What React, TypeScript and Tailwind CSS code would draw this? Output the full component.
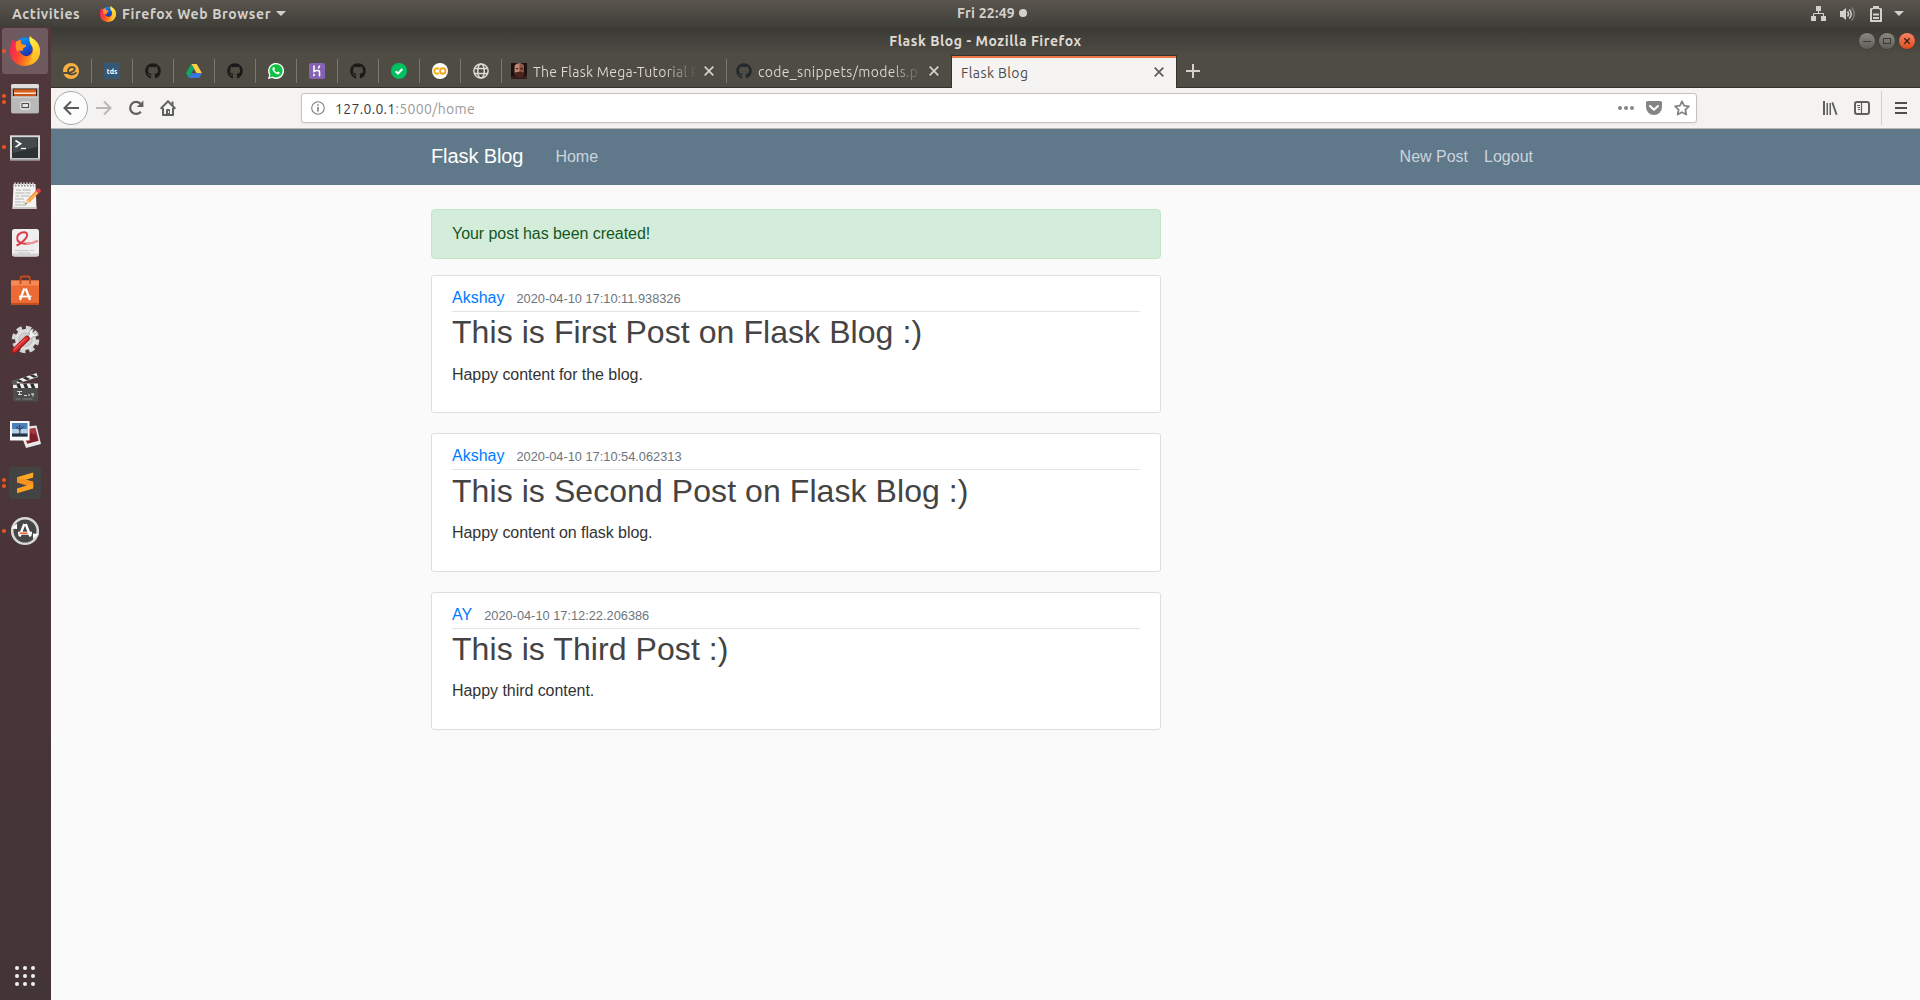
import React from "react";
import { FaGithub } from "react-icons/fa";

const UI = "font-['Ubuntu','Noto_Sans',sans-serif]";

function FirefoxLogo({ className, id }: { className: string; id: string }) {
  return (
    <svg viewBox="0 0 30 30" className={className}>
      <defs>
        <linearGradient id={id + "f"} x1="0.05" y1="0.3" x2="1" y2="0.6">
          <stop offset="0" stopColor="#f8245c" />
          <stop offset="0.35" stopColor="#fb4a2c" />
          <stop offset="0.65" stopColor="#ff8a1c" />
          <stop offset="1" stopColor="#ffd02c" />
        </linearGradient>
        <linearGradient id={id + "y"} x1="0.3" y1="0" x2="0.5" y2="1">
          <stop offset="0" stopColor="#fff44a" />
          <stop offset="1" stopColor="#ffb41c" />
        </linearGradient>
        <linearGradient id={id + "b"} x1="0.2" y1="0" x2="0.6" y2="1">
          <stop offset="0" stopColor="#0b9bf5" />
          <stop offset="0.55" stopColor="#0a5bdc" />
          <stop offset="1" stopColor="#3a1f7a" />
        </linearGradient>
      </defs>
      <circle cx="15.5" cy="12" r="10.8" fill={`url(#${id}b)`} />
      <path
        d="M2.7 3.3C3.5 5 4.5 5.4 6 6C8 4.5 9 4.2 11.3 4C10 6 11 7.5 12.5 8.5L16.2 9C16 10.8 14.4 11.5 13 12.5L12.6 15C11.4 14.4 10.5 14.8 9.8 15.6C11 19 15.5 21.4 19 19.6C22.5 17.6 23.4 14 22 10C20 7 18.6 4 20 0C21.4 2.4 24 3 26 5.2C28.8 8 30 12 30 15.6C30 23.6 23.6 30 15 30C6.4 30 0 23.6 0 16C0 11 1 7 2.7 3.3Z"
        fill={`url(#${id}f)`}
      />
      <path
        d="M20 0C18.6 4 20 7 22 10C24 13 23.4 18 21 20.6C23 22.6 20 26.5 17 27.5C24 27 29.5 22 30 15.6C30.1 12 28.8 8 26 5.2C24 3 21.4 2.4 20 0Z"
        fill={`url(#${id}y)`}
      />
      <path d="M6 6C8 4.5 9 4.2 11.3 4C10 6 11 7.5 12.5 8.5L16.2 9C16 10.8 14.4 11.5 13 12.5L12.6 15C10 13.5 8 15 7.4 16C5.5 13 5.4 9 6 6Z" fill="#ff9420" />
    </svg>
  );
}

function Slot({ dots = 0, active = false, children }: { dots?: number; active?: boolean; children: React.ReactNode }) {
  return (
    <svg viewBox="0 0 51 48" className="block h-12 w-[51px] shrink-0">
      {active && <rect x="2" y="1" width="46" height="46" rx="3" fill="#6f5a5f" />}
      {dots === 1 && <circle cx="4" cy="24" r="2.1" fill="#e95420" />}
      {dots === 2 && (
        <g fill="#e95420">
          <circle cx="4" cy="21" r="2.1" />
          <circle cx="4" cy="27" r="2.1" />
        </g>
      )}
      {children}
    </svg>
  );
}

function Dock() {
  return (
    <aside className="flex w-[51px] shrink-0 flex-col justify-between bg-linear-to-b from-[#51373c] to-[#433437]">
      <div className="flex flex-col">
        <div className="grid h-12 w-[51px] grid-cols-1 grid-rows-1">
          <div className="col-start-1 row-start-1">
            <Slot dots={1} active>
              <g />
            </Slot>
          </div>
          <div className="col-start-1 row-start-1 flex items-center justify-center">
            <FirefoxLogo id="dock" className="mr-px size-[30px]" />
          </div>
        </div>
        {/* Files */}
        <Slot dots={2}>
          <rect x="11" y="9" width="28" height="29.5" rx="2" fill="#a9a9a9" />
          <rect x="11" y="9" width="28" height="4.5" rx="2" fill="#dedede" />
          <rect x="13" y="13.5" width="24" height="8.5" fill="#3a2018" />
          <rect x="14" y="14.3" width="22" height="7" fill="#d8601c" />
          <path d="M14 17.5h22v2h-22z" fill="#f6e3d0" />
          <path d="M14 19h22v2.5h-22z" fill="#c8541c" />
          <rect x="11.5" y="21.5" width="27" height="16.5" rx="1.2" fill="#b9b9b9" />
          <path d="M12 22h26" stroke="#e4e4e4" />
          <rect x="20.8" y="27.2" width="9" height="7" rx="1.6" fill="none" stroke="#e8e8e8" strokeWidth="1.2" />
          <rect x="22" y="28.6" width="6.6" height="3.8" fill="#eee" stroke="#444" />
        </Slot>
        {/* Terminal */}
        <Slot dots={1}>
          <rect x="10" y="12.3" width="30" height="25" fill="#d9d9d9" />
          <rect x="10" y="35.6" width="30" height="1.8" fill="#a5a5a5" />
          <rect x="12" y="14.3" width="26" height="20.7" fill="#2d3234" />
          <path d="M13 15h24v9L13 30z" fill="#454b4d" />
          <path d="M15.5 17.5l5 3.3l-5 3.3" fill="none" stroke="#fff" strokeWidth="1.7" />
          <path d="M21 25.5h5" stroke="#fff" strokeWidth="1.3" />
        </Slot>
        {/* Text editor */}
        <Slot>
          <path d="M13.5 13h22l1 25h-24z" fill="#f3f3f1" />
          <path d="M12.5 36h24v2h-24z" fill="#c9c9c5" />
          <path d="M15 14v-2.5m3 2.5v-2.5m3 2.5v-2.5m3 2.5v-2.5m3 2.5v-2.5m3 2.5v-2.5m3 2.5v-2.5" stroke="#cfcfcf" strokeWidth="1.6" />
          <path d="M15 14.8h19" stroke="#555" strokeDasharray="1.5 1.5" />
          <path d="M16 19h5m1.5 0h8M15.5 22h9m1 0h5M15.5 25h4m1.5 0h9M15 28h9M15 31h6m1 0h3M15 34h11" stroke="#aaa" strokeWidth="0.9" />
          <path d="M25 33.5l2-4.5l9.5-10l2.8 2.6l-9.8 10z" fill="#f29333" />
          <path d="M27.8 31l10-10" stroke="#ffc06c" strokeWidth="1.1" />
          <path d="M25 33.5l2-4.5l2.5 2.6z" fill="#ecd3ae" />
          <path d="M25 33.5l.8-1.8l1 1z" fill="#333" />
          <path d="M35.5 19.8l2-2c1.5-1 4 1.4 3.2 2.8l-2 2z" fill="#e2464c" />
        </Slot>
        {/* Document viewer */}
        <Slot>
          <rect x="12" y="10" width="27" height="27.5" rx="2.5" fill="#efefef" />
          <path d="M12 34.5h27v.5a2.5 2.5 0 0 1-2.5 2.5h-22a2.5 2.5 0 0 1-2.5-2.5z" fill="#d2d2d2" />
          <path d="M16.500 26.500C21 25 27.500 19 27.200 15.500C26.800 11.500 17.500 13 17.200 19C17 25.500 28 26.500 38 22" fill="none" stroke="#dc3b48" strokeWidth="1.9" />
          <path d="M26 24.500c4 0 8-.8 12-3.200" fill="none" stroke="#f09aa0" strokeWidth="2" />
          <path d="M15 31.500h14m1 0h4M18 33.800h12" stroke="#c4c4c4" strokeWidth="0.9" />
        </Slot>
        {/* Software */}
        <Slot>
          <path d="M11 13.500h28v24h-28z" fill="#ec6a33" />
          <path d="M11 13.500h28v5h-28z" fill="#f58a55" />
          <path d="M11 36h28v1.800h-28z" fill="#c24e1c" />
          <path d="M20.500 17v-5c0-2 1-2.500 2.500-2.500h4.500c1.500 0 2.500.5 2.500 2.500v5" fill="none" stroke="#c9481a" strokeWidth="1.800" />
          <path d="M24.300 21.500l-4.300 11.500M25.700 21.500l4.300 11.500" stroke="#fff" strokeWidth="2.200" fill="none" />
          <path d="M19 29.500h12.300" stroke="#fff" strokeWidth="1.800" />
        </Slot>
        {/* System tools */}
        <Slot>
          <circle cx="25.500" cy="24.500" r="11.800" fill="none" stroke="#d5d5d5" strokeWidth="4" strokeDasharray="5.300 3.970" />
          <circle cx="25.500" cy="24.500" r="10.500" fill="#dfdfdf" />
          <circle cx="25.500" cy="24.500" r="6.800" fill="#d0d0d0" stroke="#bdbdbd" />
          <path d="M26.500 22.500l3-3c-1-3 1-5.500 4-5.500l-1 3.500l2 1.500l3.500-1.500c0 3-2.500 5-5.200 4.200l-3 3z" fill="#f1f1f1" stroke="#8f8f8f" strokeWidth="0.700" />
          <path d="M14.500 35.500l12.500-12" stroke="#a3181c" strokeWidth="5.600" strokeLinecap="round" />
          <path d="M14.500 35l12-11.500" stroke="#dd3034" strokeWidth="3.600" strokeLinecap="round" />
          <path d="M14.500 33.800l10-9.500" stroke="#f4797a" strokeWidth="0.900" strokeLinecap="round" />
        </Slot>
        {/* Video editor */}
        <Slot>
          <path d="M12 18.500L36.500 10l1.300 4L13.500 22z" fill="#eee" />
          <path d="M15.500 17.300l4.500 2.300l3.300-1.100l-4.500-2.300zM22.500 14.900l4.500 2.300l3.300-1.100l-4.500-2.300zM29.500 12.500l4.500 2.300l3.300-1.100l-4.500-2.300z" fill="#2c2c2c" />
          <rect x="13" y="20.500" width="25" height="5" fill="#eee" />
          <path d="M16 20.500h3.500l2 5h-3.500zM23 20.500h3.500l2 5h-3.500zM30 20.500h3.500l2 5h-3.500z" fill="#2c2c2c" />
          <rect x="13" y="25" width="25" height="13.500" rx="1" fill="#4b4d4b" />
          <circle cx="14.500" cy="19.500" r="2.500" fill="#555" />
          <path d="M17 28.500h5m-2.500 0v3.500m-1.500-.5h4M24 32.500h3m1-.5h2m1-1h3m-1-.5v3" stroke="#ddd" strokeWidth="1" fill="none" />
          <path d="M15.500 36h5m2 0h10" stroke="#8a8c8a" strokeWidth="0.800" />
        </Slot>
        {/* Photos */}
        <Slot>
          <path d="M27 15.500l9.500-1l4.500 18.500l-15 4l-3-8z" fill="#e9e9e9" />
          <path d="M27.500 18l8-1.200l3.300 13l-11.500 3l-1.800-4z" fill="#a33a42" />
          <path d="M27 27l3-3l1.500-3l2 3l2-2l2.500 7.500l-10.500 3z" fill="#7b1f2a" />
          <rect x="10" y="10" width="19.500" height="19.500" fill="#fafafa" />
          <rect x="12" y="12" width="15.500" height="13.500" fill="#4d7fb8" />
          <rect x="12" y="18" width="15.500" height="5" fill="#b5cfe6" />
          <rect x="12" y="22.500" width="15.500" height="3" fill="#26303f" />
          <path d="M19.800 23v-5m0 1l-3.500-3m3.500 3l3.500-3.500m-3.500 2v-3.500" stroke="#1f2735" strokeWidth="0.900" fill="none" />
        </Slot>
        {/* Sublime Text */}
        <Slot dots={2}>
          <rect x="9" y="8" width="32" height="32" rx="2.500" fill="#434343" />
          <path d="M17 18.200L33.200 13.400V18.600L17 23.600z" fill="#ffa726" />
          <path d="M17 18.200L33.200 22.600V28.600L17 23.600z" fill="#f7931e" />
          <path d="M17 29.500L33.200 24.500V29.400L17 34.300z" fill="#ffa01f" />
        </Slot>
        {/* Software updater */}
        <Slot dots={1}>
          <circle cx="25" cy="24" r="12.800" fill="#474747" stroke="#d8d8d8" strokeWidth="2.600" />
          <path d="M11 21.500l6-5l0 5.500zM39 27l-6 5l0-5.500z" fill="#fff" />
          <path d="M24.300 17l-4.800 12.500M25.700 17l4.800 12.500" stroke="#fff" strokeWidth="2.400" fill="none" />
          <path d="M18 26.200h14" stroke="#fff" strokeWidth="3" />
          <path d="M19.500 26.200h8" stroke="#e95420" strokeWidth="1.400" />
        </Slot>
      </div>
      <div className="mb-3.5 ml-[15px] grid w-5 grid-cols-3 gap-1">
        {Array.from({ length: 9 }, (_, i) => (
          <span key={i} className="size-1 rounded-full bg-[#f2f0f0]" />
        ))}
      </div>
    </aside>
  );
}

function TopBar() {
  return (
    <header className={`${UI} grid h-[27px] shrink-0 grid-cols-[1fr_auto_1fr] items-center bg-linear-to-b from-[#5a564e] to-[#3f3e39] text-sm font-semibold text-[#d2d0cb]`}>
      <div className="flex items-center pl-3">
        <span className="w-[88px] tracking-[0.6px]">Activities</span>
        <FirefoxLogo id="bar" className="size-4" />
        <span className="ml-[6px] tracking-[0.610px]">Firefox Web Browser</span>
        <svg viewBox="0 0 10 5" className="ml-[5px] h-[5px] w-[10px]">
          <path d="M0 0h10L5 5z" fill="#d2d0cb" />
        </svg>
      </div>
      <div className="mb-px flex items-center gap-1 pl-[60px]">
        <span className="tracking-[0.250px]">Fri 22:49</span>
        <span className="mr-[-4px] size-2 rounded-full bg-[#d2d0cb]" />
      </div>
      <div className="flex items-center justify-end pr-4 text-[#d2d0cb]">
        <svg viewBox="0 0 15 15" className="mr-[13px] size-[15px]" fill="currentColor">
          <path d="M5 0h5v5H5zM0 10h5v5H0zM10 10h5v5h-5z" />
          <path d="M7.500 5v2.500M2.500 10V7.500h10V10" fill="none" stroke="currentColor" />
        </svg>
        <svg viewBox="0 0 16 16" className="mr-[15px] size-4" fill="currentColor">
          <path d="M1 5h2.500L7 2v12L3.500 11H1z" />
          <path d="M8.500 5.500c1.300 1.500 1.300 3.500 0 5M10.300 3.500c2.400 2.700 2.400 6.300 0 9" fill="none" stroke="currentColor" strokeWidth="1.500" />
          <path d="M12.600 1.500c3.400 4 3.400 9 0 13" fill="none" stroke="currentColor" strokeWidth="1.500" opacity="0.350" />
        </svg>
        <svg viewBox="0 0 12 16" className="mr-3 h-4 w-3" fill="currentColor">
          <path fillRule="evenodd" d="M3 0h6v2h2l1 1v13H0V3l1-1h2zM2 4v10h8V4L9 3H3z" />
          <path d="M3 7.500h6v2H3zM3 11h6v2H3z" />
        </svg>
        <svg viewBox="0 0 10 5" className="h-[5px] w-[10px]">
          <path d="M0 0h10L5 5z" fill="#d2d0cb" />
        </svg>
      </div>
    </header>
  );
}

function TitleBar() {
  return (
    <div className={`${UI} grid h-7 grid-cols-[1fr_auto_1fr] items-center bg-linear-to-b from-[#3a3935] to-[#4f4c44] text-sm font-bold text-[#dfdbd2]`}>
      <span />
      <span className="tracking-[0.550px]">Flask Blog - Mozilla Firefox</span>
      <div className="flex justify-end gap-1 pr-[5px]">
        <span className="flex size-4 items-center justify-center rounded-full bg-linear-to-b from-[#8a887f] to-[#5f5e59] shadow-[0_0_0_0.500px_#33322e]">
          <svg viewBox="0 0 16 16" className="size-4">
            <path d="M4 8.500h8" stroke="#3b3a36" />
          </svg>
        </span>
        <span className="flex size-4 items-center justify-center rounded-full bg-linear-to-b from-[#8a887f] to-[#5f5e59] shadow-[0_0_0_0.500px_#33322e]">
          <svg viewBox="0 0 16 16" className="size-4">
            <rect x="4.500" y="5.500" width="7" height="5" fill="none" stroke="#3b3a36" />
          </svg>
        </span>
        <span className="flex size-4 items-center justify-center rounded-full bg-linear-to-b from-[#f68363] to-[#e04a18] shadow-[0_0_0_0.500px_#33322e]">
          <svg viewBox="0 0 16 16" className="size-4">
            <path d="M5.300 5.300l5.400 5.400M10.700 5.300l-5.400 5.400" stroke="#3b2018" strokeWidth="1.300" />
          </svg>
        </span>
      </div>
    </div>
  );
}

const favicons: React.ReactNode[] = [
  <svg key="e" viewBox="0 0 16 16" className="size-4">
    <circle cx="8" cy="8" r="8" fill="#fbb040" />
    <path d="M0 9.800C5 10.500 11.800 9 11.800 5.800C11.800 3.200 5 3.400 5 8.300C5 12.300 10.500 12.400 13.500 9.300" fill="none" stroke="#4d4a42" strokeWidth="1.800" />
  </svg>,
  <span key="tds" className="flex size-4 items-center justify-center bg-[#355876] text-[7px] leading-none font-bold text-white">tds</span>,
  <FaGithub key="g1" className="size-4 text-[#1b1a19]" />,
  <svg key="drive" viewBox="0 0 16 16" className="size-4">
    <path d="M5.300 1h5.400L16 10.200h-5.300z" fill="#ffcf48" />
    <path d="M5.300 1L8 5.600L2.700 15L0 10.200z" fill="#11a861" />
    <path d="M5.400 10.200H16L13.300 15H2.700z" fill="#3777e3" />
  </svg>,
  <FaGithub key="g2" className="size-4 text-[#1b1a19]" />,
  <svg key="wa" viewBox="0 0 16 16" className="size-4">
    <path d="M0 16l1.100-4.100A8 8 0 1 1 4.200 15z" fill="#fff" />
    <path d="M1.700 14.300l.8-2.800A6.600 6.600 0 1 1 4.600 13.500z" fill="#0dc143" />
    <path d="M5.200 4.200c.4-.3.900-.3 1.100.1l.6 1.400c.1.300-.6 1-.6 1.200c.6 1.200 1.500 2 2.700 2.500c.3.100.8-.9 1.100-.8l1.500.8c.4.900-.7 2-1.700 2C8 11.300 4.600 8.400 4.400 6c0-.7.300-1.400.8-1.800z" fill="#fff" />
  </svg>,
  <svg key="heroku" viewBox="0 0 16 16" className="size-4">
    <rect width="16" height="16" rx="2" fill="#8562b3" />
    <path d="M5 2.500v6c1.500-.8 5.500-2 5.500.5v4.500M10.500 2.500c0 1.300-.4 2-1.300 3" fill="none" stroke="#fff" strokeWidth="1.600" />
    <path d="M4.200 10.300l2.300 1.700l-2.300 1.700z" fill="#fff" />
  </svg>,
  <FaGithub key="g3" className="size-4 text-[#1b1a19]" />,
  <svg key="check" viewBox="0 0 16 16" className="size-4">
    <circle cx="8" cy="8" r="8" fill="#00c160" />
    <path d="M4.700 8.200l2.300 2.300l4.300-4.500" fill="none" stroke="#fff" strokeWidth="2" />
  </svg>,
  <svg key="colab" viewBox="0 0 16 16" className="size-4">
    <circle cx="8" cy="8" r="8" fill="#fff" />
    <path d="M6.800 6A2.700 2.700 0 1 0 6.800 10" fill="none" stroke="#f9ab00" strokeWidth="1.900" />
    <circle cx="10.800" cy="8" r="2.700" fill="none" stroke="#f5a320" strokeWidth="1.900" />
  </svg>,
  <svg key="globe" viewBox="0 0 16 16" className="size-4" fill="none" stroke="#dfdbd2" strokeWidth="1.500">
    <circle cx="8" cy="8" r="7.100" />
    <ellipse cx="8" cy="8" rx="3.300" ry="7.100" />
    <path d="M1.500 5.500h13M1.500 10.500h13" />
  </svg>,
];

function Close({ color }: { color: string }) {
  return (
    <svg viewBox="0 0 10 10" className="size-[10px] shrink-0">
      <path d="M0.700 0.700l8.600 8.600M9.300 0.700l-8.600 8.600" stroke={color} strokeWidth="1.700" />
    </svg>
  );
}

function TabStrip() {
  return (
    <div className={`${UI} flex h-[33px] items-stretch bg-[#4f4c44] text-sm text-[#dfdbd2]`}>
      {favicons.map((icon, i) => (
        <div key={i} className="flex w-[41px] items-center border-b border-[#33322e] pl-3">
          {icon}
          <span className="ml-3 h-6 w-px bg-[#7b786f]" />
        </div>
      ))}
      <div className="flex w-[225px] items-center border-b border-[#33322e] pl-[9px]">
        <svg viewBox="0 0 16 16" className="size-4 shrink-0">
          <rect width="16" height="16" fill="#1d1110" />
          <path d="M3.500 4c0-5 9.500-5 9.500 0v5c0 3-2 5-4.500 5s-5-2-5-5z" fill="#c08573" />
          <path d="M8.500 1c3 0 4.500 1.500 4.500 4v4c0 3-2 5-4.500 5z" fill="#8a5040" />
          <path d="M4 9c2 1 3-.5 4.500-.5S11 10 13 9c0 4-2 6.500-4.500 6.500S4 13 4 9z" fill="#4c221b" />
          <path d="M4.800 5.700h2.500M9.300 5.700h2.500" stroke="#2e1510" />
          <path d="M0 13l4 0l3 3H0zM16 12l-3 1l-3 3h6z" fill="#33211f" />
        </svg>
        <span className="mt-0.5 ml-[6px] w-[166px] overflow-hidden bg-linear-to-r from-[#dfdbd2] from-80% to-transparent bg-clip-text tracking-[0.250px] whitespace-nowrap text-transparent">The Flask Mega-Tutorial P</span>
        <span className="ml-[7px] flex">
          <Close color="#d5d1c8" />
        </span>
        <span className="ml-3 h-6 w-px bg-[#7b786f]" />
      </div>
      <div className="flex w-[224px] items-center border-b border-[#33322e] pl-[9px]">
        <FaGithub className="size-4 shrink-0 text-[#24292e]" />
        <span className="mt-0.5 ml-[6px] w-[165px] overflow-hidden bg-linear-to-r from-[#dfdbd2] from-80% to-transparent bg-clip-text tracking-[0.320px] whitespace-nowrap text-transparent">code_snippets/models.p</span>
        <span className="ml-[6px] flex">
          <Close color="#d5d1c8" />
        </span>
      </div>
      <div className="flex w-[226px] items-center justify-between border border-b-0 border-[#33322e] bg-[#f5f4f2] pr-3 pl-[9px] text-[#4c4c4c] shadow-[inset_0_2px_0_#f07746]">
        <span className="mt-px tracking-[0.400px]">Flask Blog</span>
        <Close color="#5c5c5c" />
      </div>
      <div className="flex grow items-center border-b border-[#33322e] pl-[9px]">
        <svg viewBox="0 0 14 14" className="mb-px size-[14px]">
          <path d="M7 0v14M0 7h14" stroke="#d5d1c8" strokeWidth="2" />
        </svg>
      </div>
    </div>
  );
}

function Toolbar() {
  return (
    <div className={`${UI} flex h-[41px] items-center border-b border-[#b9b5b0] bg-[#f4f3f1] pl-[3px] text-sm`}>
      <span className="flex size-[34px] items-center justify-center rounded-full border border-[#aaa9a8] bg-[#fcfcfc]">
        <svg viewBox="0 0 16 16" className="size-4" fill="none" stroke="#5a5a59" strokeWidth="2">
          <path d="M16 8H1.500M8 1.500L1.500 8L8 14.500" />
        </svg>
      </span>
      <svg viewBox="0 0 16 16" className="ml-2 size-4" fill="none" stroke="#b9b8b6" strokeWidth="2">
        <path d="M0 8h14.500M8 1.500L14.500 8L8 14.500" />
      </svg>
      <svg viewBox="0 0 16 16" className="ml-4 size-4" fill="none" stroke="#5f5f5e" strokeWidth="2.200">
        <path d="M12.800 11.700A6 6 0 1 1 12.500 3.800" />
        <path d="M15.400 0.500V7.100H8.800z" fill="#5f5f5e" stroke="none" />
      </svg>
      <svg viewBox="0 0 16 16" className="ml-4 size-4">
        <path d="M0.600 8.700L8 1.300L15.400 8.700" fill="none" stroke="#5f5f5e" strokeWidth="2" />
        <path d="M11.500 1.500h2v4l-2-1.800z" fill="#5f5f5e" />
        <path d="M3 8v7h10V8" fill="none" stroke="#5f5f5e" strokeWidth="2" strokeLinejoin="round" />
        <path d="M6 15V9.500L6.500 9h3l.5.500V15z" fill="#5f5f5e" />
        <rect x="8" y="11" width="1" height="2" fill="#f4f3f1" />
      </svg>
      <div className="ml-[125px] flex h-[30px] w-[1396px] items-center rounded-[3px] border border-[#c3c2c0] bg-white pr-[6px] pl-[9px] shadow-[0_1px_3px_rgba(0,0,0,0.060)]">
        <svg viewBox="0 0 14 14" className="size-[14px]" fill="none" stroke="#7c7c7c">
          <circle cx="7" cy="7" r="6.300" strokeWidth="1.100" />
          <path d="M7 6v4.500M7 3.200v1.600" strokeWidth="1.600" />
        </svg>
        <span className="mt-0.5 ml-[10px] grow tracking-[0.320px] text-[#9a9a9a]">
          <span className="text-[#3a3a3a]">127.0.0.1</span>:5000/home
        </span>
        <svg viewBox="0 0 16 4" className="h-1 w-4" fill="#858585">
          <circle cx="2" cy="2" r="2" />
          <circle cx="8" cy="2" r="2" />
          <circle cx="14" cy="2" r="2" />
        </svg>
        <svg viewBox="0 0 16 16" className="ml-3 size-4">
          <path d="M1.800 1h12.400c1 0 1.800.8 1.800 1.800V7a8 8 0 0 1-16 0V2.800C0 1.800.8 1 1.800 1z" fill="#858585" />
          <path d="M4 6l4 3.800L12 6" fill="none" stroke="#fff" strokeWidth="2" strokeLinecap="round" strokeLinejoin="round" />
        </svg>
        <svg viewBox="0 0 16 16" className="ml-3 size-4">
          <path d="M8 1.300l2.100 4.400l4.800.6l-3.500 3.300l.9 4.900L8 12.200l-4.300 2.300l.9-4.900L1.100 6.300l4.800-.6z" fill="none" stroke="#858585" strokeWidth="1.800" strokeLinejoin="round" />
        </svg>
      </div>
      <svg viewBox="0 0 16 16" className="ml-[125px] size-4" fill="#5f5f5e">
        <path d="M1 1h2v14H1zM4.500 3h1.500v12H4.500zM7.500 3H9v12H7.500zM9.500 2.700l1.700-.6l4.300 12.300l-1.800.6z" />
      </svg>
      <svg viewBox="0 0 16 16" className="ml-4 size-4" fill="none" stroke="#5f5f5e">
        <rect x="1" y="2" width="14" height="12" rx="2" strokeWidth="2" />
        <path d="M7.500 2v12" strokeWidth="1.200" />
        <path d="M3 5.500h3M3.500 7.500H6M4 9.500h2" strokeWidth="1" />
      </svg>
      <span className="ml-[11px] h-[34px] w-px bg-[#d3d1ce]" />
      <svg viewBox="0 0 12 12" className="ml-[13px] size-3" fill="#4f4f4e">
        <path d="M0 0h12v2H0zM0 5h12v2H0zM0 10h12v2H0z" />
      </svg>
    </div>
  );
}

const posts = [
  { author: "Akshay", date: "2020-04-10 17:10:11.938326", title: "This is First Post on Flask Blog :)", body: "Happy content for the blog." },
  { author: "Akshay", date: "2020-04-10 17:10:54.062313", title: "This is Second Post on Flask Blog :)", body: "Happy content on flask blog." },
  { author: "AY", date: "2020-04-10 17:12:22.206386", title: "This is Third Post :)", body: "Happy third content." },
];

function Page() {
  return (
    <main className="grow bg-[#fafafa] font-['Liberation_Sans',Arial,sans-serif] text-base text-[#333]">
      <nav className="h-14 bg-[#5f788a]">
        <div className="ml-[380px] flex h-14 w-[1110px] items-center text-[#cbd5de]">
          <span className="mb-0.5 text-xl tracking-[-0.1px] text-white">Flask Blog</span>
          <span className="ml-8 grow">Home</span>
          <span>New Post</span>
          <span className="mr-2 ml-4">Logout</span>
        </div>
      </nav>
      <div className="ml-[380px] flex w-[1110px] flex-col pt-6">
        <div className="mb-4 flex h-[50px] w-[730px] items-center rounded border border-[#c3e6cb] bg-[#d4edda] px-5 text-[#155724]">
          <span className="tracking-[-0.050px]">Your post has been created!</span>
        </div>
        {posts.map((p) => (
          <article key={p.title} className="mb-5 h-[138.400px] w-[730px] rounded-[3px] border border-[#dddddd] bg-white px-5 py-2.5">
            <div className="mb-[1.400px] h-[26px] border-b border-[#e3e3e3] leading-6">
              <span className="text-[#007bff]">{p.author}</span>
              <span className="ml-3 text-[12.800px] text-[#6c757d]">{p.date}</span>
            </div>
            <h2 className="mb-[10.800px] text-[32px] leading-[38.400px] tracking-[0.070px] text-[#444]">{p.title}</h2>
            <p className="leading-6 tracking-[-0.050px]">{p.body}</p>
          </article>
        ))}
      </div>
    </main>
  );
}

export default function App() {
  return (
    <div className="flex h-[1000px] w-[1920px] flex-col overflow-hidden">
      <TopBar />
      <div className="flex grow">
        <Dock />
        <div className="flex grow flex-col">
          <TitleBar />
          <TabStrip />
          <Toolbar />
          <Page />
        </div>
      </div>
    </div>
  );
}
